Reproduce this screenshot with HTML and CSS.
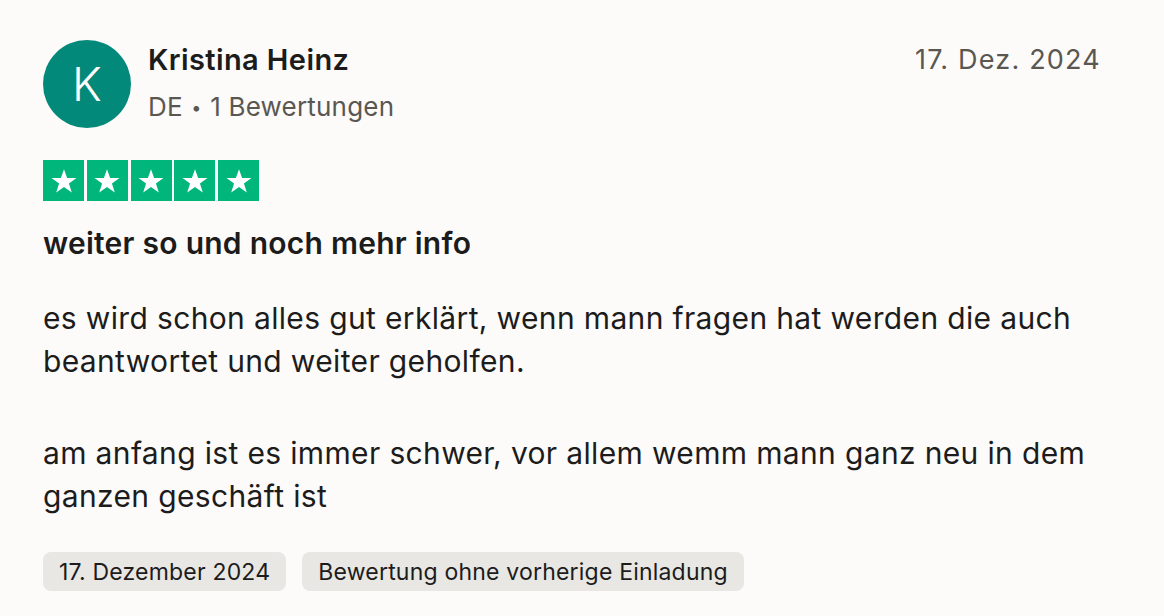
FILE: index.html
```html
<!DOCTYPE html>
<html lang="de">
<head>
<meta charset="utf-8">
<link rel="stylesheet" href="styles.css">
</head>
<body>
<article class="review">
  <header class="head">
    <div class="avatar">K</div>
    <div class="who">
      <div class="name">Kristina Heinz</div>
      <div class="meta">DE <span class="dot">•</span> 1 Bewertungen</div>
    </div>
    <time class="date">17. Dez. 2024</time>
  </header>
  <div class="stars">
    <span class="star"><svg viewBox="0 0 24 24"><path d="M12 3.2l2.35 6.6h7l-5.66 4.1 2.16 6.7L12 16.5l-5.85 4.1 2.16-6.7L2.65 9.8h7z" fill="#fff"/></svg></span>
    <span class="star"><svg viewBox="0 0 24 24"><path d="M12 3.2l2.35 6.6h7l-5.66 4.1 2.16 6.7L12 16.5l-5.85 4.1 2.16-6.7L2.65 9.8h7z" fill="#fff"/></svg></span>
    <span class="star"><svg viewBox="0 0 24 24"><path d="M12 3.2l2.35 6.6h7l-5.66 4.1 2.16 6.7L12 16.5l-5.85 4.1 2.16-6.7L2.65 9.8h7z" fill="#fff"/></svg></span>
    <span class="star"><svg viewBox="0 0 24 24"><path d="M12 3.2l2.35 6.6h7l-5.66 4.1 2.16 6.7L12 16.5l-5.85 4.1 2.16-6.7L2.65 9.8h7z" fill="#fff"/></svg></span>
    <span class="star"><svg viewBox="0 0 24 24"><path d="M12 3.2l2.35 6.6h7l-5.66 4.1 2.16 6.7L12 16.5l-5.85 4.1 2.16-6.7L2.65 9.8h7z" fill="#fff"/></svg></span>
  </div>
  <h2 class="title">weiter so und noch mehr info</h2>
  <p class="body">es wird schon alles gut erklärt, wenn mann fragen hat werden die auch beantwortet und weiter geholfen.</p>
  <p class="body">am anfang ist es immer schwer, vor allem wemm mann ganz neu in dem ganzen geschäft ist</p>
  <div class="tags">
    <span class="tag">17. Dezember 2024</span>
    <span class="tag">Bewertung ohne vorherige Einladung</span>
  </div>
</article>
</body>
</html>
```
FILE: styles.css
```css
html, body {
  margin: 0;
  padding: 0;
  background: #fcfbf9;
}
body {
  font-family: Inter, "Noto Sans", sans-serif;
  color: #1c1c1c;
}
.review {
  padding: 40px 63px 0 43px;
}
.head {
  display: flex;
  align-items: flex-start;
}
.avatar {
  width: 88px;
  height: 88px;
  border-radius: 50%;
  background: #03897a;
  color: #fff;
  font-size: 46px;
  font-weight: 300;
  display: flex;
  align-items: center;
  justify-content: center;
  flex: none;
}
.who {
  margin-left: 17px;
  flex: 1;
  padding-top: 2px;
}
.name {
  font-size: 29px;
  font-weight: 600;
  line-height: 36px;
  letter-spacing: 0.4px;
}
.meta {
  font-size: 26px;
  line-height: 34px;
  color: #5a5752;
  margin-top: 12px;
  letter-spacing: 0.2px;
}
.dot {
  font-size: 18px;
  vertical-align: 2px;
  margin: 0 1px;
}
.date {
  font-size: 27px;
  line-height: 36px;
  color: #5a5752;
  padding-top: 2px;
  letter-spacing: 1.2px;
}
.stars {
  display: flex;
  gap: 2.75px;
  margin-top: 32px;
}
.star {
  width: 41px;
  height: 41px;
  background: #00b67a;
  display: flex;
  align-items: center;
  justify-content: center;
}
.star svg {
  width: 32px;
  height: 32px;
}
.title {
  font-size: 30px;
  font-weight: 600;
  line-height: 36px;
  margin: 24px 0 0;
  letter-spacing: 0.25px;
}
.body {
  font-size: 30px;
  line-height: 43px;
  margin: 36px 0 0;
  letter-spacing: 0.35px;
}
.body + .body {
  margin-top: 49px;
}
.tags {
  display: flex;
  gap: 16px;
  margin-top: 34px;
}
.tag {
  background: #e8e7e3;
  border-radius: 8px;
  height: 39px;
  padding: 0 16px;
  display: flex;
  align-items: center;
  font-size: 23px;
  letter-spacing: 0.2px;
}
```
